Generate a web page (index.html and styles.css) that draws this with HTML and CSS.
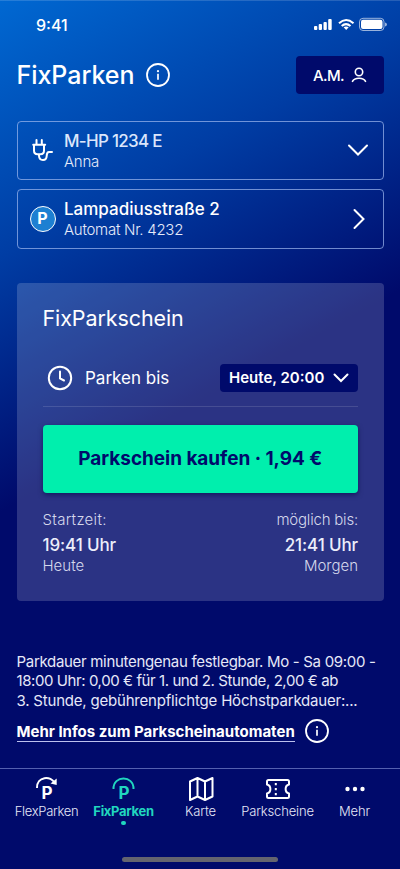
FILE: index.html
```html
<!DOCTYPE html>
<html lang="de">
<head>
<meta charset="utf-8">
<meta name="viewport" content="width=device-width, initial-scale=1">
<title>FixParken</title>
<link rel="stylesheet" href="styles.css">
</head>
<body>
<div class="app">
  <div class="status">
    <span class="clock">9:41</span>
    <svg width="74" height="14" viewBox="0 0 74 14" fill="#fff">
      <rect x="1" y="9" width="3.300" height="4" rx="1"/><rect x="5.700" y="7" width="3.300" height="6" rx="1"/><rect x="10.500" y="5" width="3.300" height="8" rx="1"/><rect x="15.200" y="2" width="3.500" height="11" rx="1"/>
      <g fill="none" stroke="#fff" stroke-width="2.100"><path d="M26 6.200Q33 -.2 40.500 6.200"/><path d="M28.700 9Q33 5.200 37.500 9"/></g>
      <path d="M30.600 10.300Q33 8.500 35.700 10.300L33.200 12.900Z"/>
      <rect x="46.500" y="1.300" width="24.500" height="12.200" rx="3.500" fill="none" stroke="#fff" stroke-opacity=".6"/><rect x="48" y="2.700" width="21.500" height="9.400" rx="2"/><path d="M72 5.500q2 .3 2 2t-2 2z" opacity=".6"/>
    </svg>
  </div>
  <header class="header">
    <h1>FixParken</h1>
    <svg class="info" width="24" height="24" viewBox="0 0 24 24"><circle cx="12" cy="12" r="11" fill="none" stroke="#fff" stroke-width="1.800"/><circle cx="12" cy="8.200" r="1.100" fill="#fff"/><path d="M12 10.800V16.700" stroke="#fff" stroke-width="1.700"/></svg>
    <button class="account"><span>A.M.</span><svg width="16" height="16" viewBox="0 0 16 16" fill="none" stroke="#fff" stroke-width="1.600" stroke-linecap="round"><circle cx="8" cy="5" r="3.700"/><path d="M1.500 14.400C3.500 10.200 12.500 10.200 14.500 14.400"/></svg></button>
  </header>
  <section class="cards">
    <div class="card">
      <svg class="lead" width="26" height="26" viewBox="0 0 26 26" fill="none" stroke="#fff" stroke-width="2" stroke-linecap="round"><path d="M6.500 3V7M11.800 3V7M3.200 7.700H15.200M4 8V13.500Q4 17.300 7.500 17.300H10.500Q14 17.300 14 13.500V8M9 17.500V19Q9.300 23 13 23Q16.500 23 16.700 19Q16.800 15 19 15H22"/></svg>
      <div class="lines"><div class="main plate">M-HP 1234 E</div><div class="sub anna">Anna</div></div>
      <svg width="22" height="22" viewBox="0 0 22 22" fill="none" stroke="#fff" stroke-width="2" stroke-linecap="round"><path d="M2 6.500L11 15.500L20 6.500"/></svg>
    </div>
    <div class="card">
      <div class="badge">P</div>
      <div class="lines"><div class="main street">Lampadiusstraße 2</div><div class="sub machine">Automat Nr. 4232</div></div>
      <svg width="22" height="22" viewBox="0 0 22 22" fill="none" stroke="#fff" stroke-width="2" stroke-linecap="round"><path d="M7.500 2L16.500 11L7.500 20"/></svg>
    </div>
  </section>
  <section class="panel">
    <h2>FixParkschein</h2>
    <div class="until">
      <svg width="26" height="26" viewBox="0 0 26 26" fill="none" stroke="#fff" stroke-width="2" stroke-linecap="round"><circle cx="13" cy="13" r="11.200"/><path d="M13 6.500V13.500L17 15.500"/></svg>
      <span class="until-label">Parken bis</span>
      <button class="time"><span>Heute, 20:00</span><svg width="16" height="12" viewBox="0 0 16 12" fill="none" stroke="#fff" stroke-width="2" stroke-linecap="round"><path d="M1.500 2.500L8 9L14.500 2.500"/></svg></button>
    </div>
    <button class="buy"><span>Parkschein kaufen · 1,94 €</span></button>
    <div class="range">
      <div><p class="cap start">Startzeit:</p><p class="hour">19:41 Uhr</p><p class="day">Heute</p></div>
      <div class="right"><p class="cap possible">möglich bis:</p><p class="hour">21:41 Uhr</p><p class="day">Morgen</p></div>
    </div>
  </section>
  <div class="note"><p class="n1">Parkdauer minutengenau festlegbar. Mo - Sa 09:00 -</p><p class="n2">18:00 Uhr: 0,00 € für 1. und 2. Stunde, 2,00 € ab</p><p class="n3">3. Stunde, gebührenpflichtge Höchstparkdauer:...</p></div>
  <div class="more">
    <a class="link">Mehr Infos zum Parkscheinautomaten</a>
    <svg width="24" height="24" viewBox="0 0 24 24"><circle cx="12" cy="12" r="11" fill="none" stroke="#fff" stroke-width="1.800"/><circle cx="12" cy="8.200" r="1.100" fill="#fff"/><path d="M12 10.800V16.700" stroke="#fff" stroke-width="1.700"/></svg>
  </div>
  <nav class="nav">
    <div class="tab"><svg width="26" height="26" viewBox="0 0 26 26" fill="none" stroke="#fff" stroke-width="2"><path d="M3 12C2.500 0 17.500 -.5 20.500 7"/><path d="M22.700 2.500V9L16.500 7.500Z" fill="#fff" stroke="none"/><text class="p" x="7.500" y="22.700">P</text></svg><span class="t1">FlexParken</span></div>
    <div class="tab active"><svg width="26" height="26" viewBox="0 0 26 26" fill="none" stroke="#20d6bf" stroke-width="2"><path d="M2.500 13C2 -1 23 -1 22.500 13"/><text class="p" x="7.500" y="22.700">P</text></svg><span class="t2">FixParken</span></div>
    <div class="tab"><svg width="26" height="26" viewBox="0 0 26 26" fill="none" stroke="#fff" stroke-width="2" stroke-linejoin="round"><path d="M2 5.500L9.500 2L17 5.500L24.500 2V20.500L17 24L9.500 20.500L2 24ZM9.500 2V20.500M17 5.500V24"/></svg><span class="t3">Karte</span></div>
    <div class="tab"><svg width="26" height="26" viewBox="0 0 26 26" fill="none" stroke="#fff" stroke-width="2" stroke-linejoin="round"><path d="M3.500 4H22.500Q24 4 24 5.500V8.500C19.500 9.500 19.500 16.500 24 17.500V20.500Q24 22 22.500 22H3.500Q2 22 2 20.500V17.500C6.500 16.500 6.500 9.500 2 8.500V5.500Q2 4 3.500 4Z"/><path d="M10.800 6V20" stroke-dasharray="2.200 2.800" stroke-dashoffset="-1"/></svg><span class="t4">Parkscheine</span></div>
    <div class="tab"><svg width="26" height="26" viewBox="0 0 26 26" fill="#fff"><circle cx="5.500" cy="13" r="2.200"/><circle cx="13" cy="13" r="2.200"/><circle cx="20.500" cy="13" r="2.200"/></svg><span class="t5">Mehr</span></div>
  </nav>
  <div class="home"></div>
</div>
</body>
</html>
```
FILE: styles.css
```css
* { box-sizing: border-box; }
body { margin: 0; font-family: Inter, "Liberation Sans", sans-serif; color: #fff; }
h1, h2, p { margin: 0; font-weight: 400; }
button { border: 0; padding: 0; font: inherit; color: inherit; }
svg { display: block; flex: none; overflow: visible; }
.app { width: 400px; height: 869px; overflow: hidden; display: flex; flex-direction: column; background: linear-gradient(151deg, #0068d2 0, #003da4 225px, #000a6b 448px); white-space: nowrap; }
.status { height: 56px; padding: 16px 13px 0 36px; border-top: 1px solid rgba(255, 255, 255, .15); display: flex; justify-content: space-between; align-items: flex-start; }
.clock { font-size: 16px; line-height: 16px; font-weight: 500; }
.header { height: 38px; display: flex; align-items: center; padding: 0 16px 0 16.500px; }
.header h1 { font-size: 25px; line-height: 38px; font-weight: 500; letter-spacing: -.03px; }
.info { margin-left: 11px; }
.account { margin-left: auto; width: 88px; height: 38px; border-radius: 4px; background: #000a6b; display: flex; align-items: center; justify-content: center; gap: 7px; font-size: 15px; font-weight: 500; letter-spacing: -.6px; }
.cards { margin: 26.500px 16px 0 16.500px; display: grid; gap: 9px; }
.card { height: 59.500px; border: 1px solid rgba(160, 185, 240, .7); border-radius: 4px; display: flex; align-items: center; padding: 0 14px 0 12px; }
.lines { flex: 1; margin: 1px 0 0 8.500px; }
.main { font-size: 17px; line-height: 21px; font-weight: 500; }
.plate { color: #dce6fb; letter-spacing: -.7px; }
.street { letter-spacing: 0; }
.sub { font-size: 15px; line-height: 19px; font-weight: 300; color: #e6ebfa; letter-spacing: -.27px; }
.badge { width: 26px; height: 26px; border-radius: 50%; border: 1.500px solid #fff; background: #1d80d2; font-size: 16px; line-height: 23px; font-weight: 700; text-align: center; }
.panel { margin: 34.500px 16px 0 16.500px; height: 317.500px; border-radius: 4px; background: rgba(255, 255, 255, .17); padding: 21px 26px 0; }
.panel h2 { font-size: 21.500px; line-height: 28px; letter-spacing: -.1px; }
.until { margin-top: 30px; height: 45px; padding: 1px 0 14px 4px; display: flex; align-items: center; border-bottom: 1.500px solid rgba(255, 255, 255, .13); }
.until-label { margin-left: 12.500px; font-size: 17px; font-weight: 400; }
.time { margin-left: auto; width: 138px; height: 28px; flex: none; border-radius: 4px; background: #000a6b; display: flex; align-items: center; justify-content: space-between; padding: 0 9px; font-size: 15px; font-weight: 600; }
.buy { display: block; width: 100%; height: 68.500px; margin-top: 17.500px; border-radius: 4px; background: #00efad; color: #000a6b; font-size: 19px; font-weight: 700; letter-spacing: -.05px; box-shadow: 0 2px 5px rgba(0, 0, 60, .5); }
.range { margin-top: 16.500px; display: flex; justify-content: space-between; color: #d5d8ec; }
.right { text-align: right; }
.cap { font-size: 15px; line-height: 20px; font-weight: 300; }
.start { letter-spacing: .3px; }
.possible { letter-spacing: -.2px; }
.hour { margin-top: 4px; font-size: 17px; line-height: 22px; font-weight: 500; color: #eceefa; letter-spacing: -.12px; }
.day { font-size: 15px; line-height: 19px; font-weight: 300; }
.note { margin: 51.500px 0 0 16.500px; font-size: 15px; line-height: 19.300px; font-weight: 300; color: #e6e8f8; }
.n1 { letter-spacing: -.31px; }
.n2 { letter-spacing: -.42px; }
.n3 { letter-spacing: -.2px; }
.more { margin: 9.500px 0 0 16.500px; height: 24px; display: flex; align-items: center; gap: 10px; }
.link { font-size: 15px; line-height: 19px; font-weight: 700; border-bottom: 1.500px solid #bcc1ee; padding-top: 2px; }
.nav { margin-top: 24.500px; height: 89px; border-top: 1px solid #5460b0; display: flex; padding: 7px 7px 0 8px; }
.tab { flex: 1 0 77px; display: flex; flex-direction: column; align-items: center; font-size: 13px; line-height: 18px; font-weight: 300; color: #e6e8f8; }
.active { color: #20d6bf; font-weight: 700; }
.active::after { content: ""; width: 4.500px; height: 4.500px; border-radius: 50%; background: #20d6bf; margin-top: 1px; }
.t1, .t2 { letter-spacing: -.3px; }
.t3, .t4, .t5 { letter-spacing: -.15px; }
.p { font-family: Inter, sans-serif; font-size: 17px; font-weight: 700; fill: #fff; stroke: none; }
.active .p { fill: #20d6bf; }
.home { flex: none; width: 156px; height: 5px; border-radius: 3px; margin-left: 122px; background: #64646f; }
```
